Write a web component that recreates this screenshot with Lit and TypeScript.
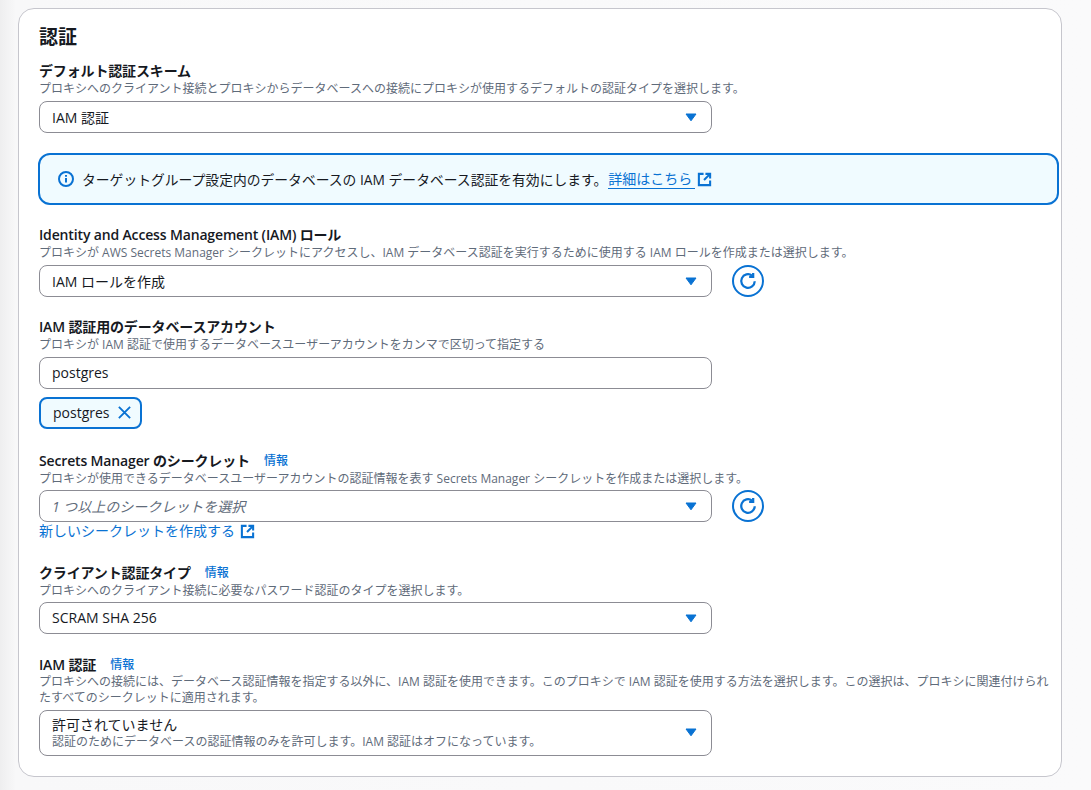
import { LitElement, html, css } from 'lit';
import { customElement } from 'lit/decorators.js';

const caret = html`<svg class="caret" viewBox="0 0 16 16"><path d="M3 5h10L8 11.8z" fill="#0972d3" stroke="#0972d3" stroke-width="1" stroke-linejoin="round"/></svg>`;
const ext = html`<svg class="ext" viewBox="0 0 16 16" fill="none" stroke="#0972d3" stroke-width="2.2"><path d="M7 2H2v12h12V9"/><path d="M9 2h5v5"/><path d="M14 2L7.5 8.5"/></svg>`;
const refresh = html`<div class="refresh"><svg viewBox="0 0 16 16" fill="none" stroke="#0972d3" stroke-width="2"><path d="M14 8.2A6 6 0 1 1 11.6 3.2"/><path d="M12.6 .8V4.4H9"/></svg></div>`;

@customElement('app-root')
export class AppRoot extends LitElement {
  static styles = css`
    :host {
      display: block;
      width: 1091px;
      height: 790px;
      overflow: hidden;
      box-sizing: border-box;
      padding: 8px 29px 0 18px;
      background: linear-gradient(90deg, #eeeeef 0, #f8f8f9 16px, #fafafb 100%);
      font-family: 'Open Sans', 'Noto Sans CJK JP', sans-serif;
      color: #16191f;
      font-size: 14px;
    }
    .card {
      box-sizing: border-box;
      height: 769px;
      background: #fff;
      border: 1px solid #c6c6cd;
      border-radius: 16px;
      padding: 16px 1px 0 20px;
    }
    h2 {
      margin: 0 0 13px;
      font-size: 19px;
      line-height: 24px;
      font-weight: 700;
    }
    .label {
      display: flex;
      gap: 14px;
      align-items: center;
      font-size: 14px;
      line-height: 18px;
      font-weight: 600;
      letter-spacing: -0.15px;
    }
    .info {
      font-size: 12px;
      font-weight: 500;
      letter-spacing: 0;
      color: #0972d3;
    }
    .desc {
      font-size: 12px;
      line-height: 16px;
      padding-top: 1px;
      color: #5f6b7a;
      white-space: nowrap;
      margin-bottom: 4px;
    }
    .has-info + .desc { margin-bottom: 3px; }
    .has-info + .wide { white-space: normal; width: 1018px; padding-top: 0; margin-bottom: 4px; }
    .row { display: flex; align-items: center; gap: 20px; }
    .select {
      box-sizing: border-box;
      width: 673px;
      height: 32px;
      flex: none;
      display: flex;
      align-items: center;
      justify-content: space-between;
      padding: 0 12px 1px 12px;
      border: 1px solid #8c8c94;
      border-radius: 8px;
      background: #fff;
      font-size: 14px;
    }
    .select.tall { height: 46px; padding-bottom: 2px; }
    .select .ph { font-style: italic; color: #5f6b7a; }
    .select .sub { font-size: 12px; line-height: 16px; color: #5f6b7a; }
    .select .main { line-height: 19px; }
    .caret { width: 16px; height: 16px; flex: none; }
    .refresh {
      box-sizing: border-box;
      width: 32px;
      height: 32px;
      border: 2px solid #0972d3;
      border-radius: 50%;
      display: flex;
      align-items: center;
      justify-content: center;
    }
    .refresh svg { width: 18px; height: 18px; }
    .alert {
      box-sizing: border-box;
      width: 1021px;
      height: 52px;
      margin: 20px 0 21px -1px;
      display: flex;
      align-items: center;
      gap: 8px;
      padding: 0 0 0 18px;
      background: #f0fbff;
      border: 2px solid #0972d3;
      border-radius: 12px;
      font-size: 14px;
    }
    .alert .i { width: 16px; height: 16px; flex: none; }
    .alert .body { display: flex; align-items: center; }
    .alert .msg { font-size: 13.8px; }
    a {
      color: #0972d3;
      text-decoration: none;
    }
    .alert a {
      border-bottom: 1px solid #0972d3;
      padding: 0 3px 0 0;
      line-height: 19px;
      margin-left: 1px;
    }
    .ext { width: 15px; height: 15px; flex: none; margin-left: 2px; }
    .link .ext { margin-left: 5px; }
    .gap { margin-top: 21px; }
    .gap-token { margin-top: 23px; }
    .gap-link { margin-top: 24px; }
    .gap-select { margin-top: 22px; }
    .token {
      box-sizing: border-box;
      display: flex;
      align-items: center;
      gap: 7px;
      width: 103px;
      height: 32px;
      margin-top: 8px;
      padding: 0 0 1px 12px;
      background: #f0fbff;
      border: 2px solid #0972d3;
      border-radius: 8px;
      font-size: 14px;
    }
    .token svg { width: 15px; height: 15px; }
    .link {
      display: flex;
      align-items: center;
      font-size: 14px;
      line-height: 18px;
    }
  `;

  render() {
    return html`
      <div class="card">
        <h2>認証</h2>

        <div class="label">デフォルト認証スキーム</div>
        <div class="desc">プロキシへのクライアント接続とプロキシからデータベースへの接続にプロキシが使用するデフォルトの認証タイプを選択します。</div>
        <div class="select"><span>IAM 認証</span>${caret}</div>

        <div class="alert">
          <svg class="i" viewBox="0 0 16 16" fill="none" stroke="#0972d3" stroke-width="2"><circle cx="8" cy="8" r="7"/><path d="M8 7v4.5M8 4v1.8"/></svg>
          <div class="body">
            <span class="msg">ターゲットグループ設定内のデータベースの IAM データベース認証を有効にします。</span>
            <a href="#">詳細はこちら</a>${ext}
          </div>
        </div>

        <div class="label">Identity and Access Management (IAM) ロール</div>
        <div class="desc">プロキシが AWS Secrets Manager シークレットにアクセスし、IAM データベース認証を実行するために使用する IAM ロールを作成または選択します。</div>
        <div class="row"><div class="select"><span>IAM ロールを作成</span>${caret}</div>${refresh}</div>

        <div class="label gap">IAM 認証用のデータベースアカウント</div>
        <div class="desc">プロキシが IAM 認証で使用するデータベースユーザーアカウントをカンマで区切って指定する</div>
        <div class="select"><span>postgres</span></div>
        <div class="token">
          <span>postgres</span>
          <svg viewBox="0 0 16 16" fill="none" stroke="#0972d3" stroke-width="2"><path d="M2 2l12 12M14 2L2 14"/></svg>
        </div>

        <div class="label has-info gap-token">Secrets Manager のシークレット<span class="info">情報</span></div>
        <div class="desc">プロキシが使用できるデータベースユーザーアカウントの認証情報を表す Secrets Manager シークレットを作成または選択します。</div>
        <div class="row"><div class="select"><span class="ph">1 つ以上のシークレットを選択</span>${caret}</div>${refresh}</div>
        <div class="link"><a href="#">新しいシークレットを作成する</a>${ext}</div>

        <div class="label has-info gap-link">クライアント認証タイプ<span class="info">情報</span></div>
        <div class="desc">プロキシへのクライアント接続に必要なパスワード認証のタイプを選択します。</div>
        <div class="select"><span>SCRAM SHA 256</span>${caret}</div>

        <div class="label has-info gap-select">IAM 認証<span class="info">情報</span></div>
        <div class="desc wide">プロキシへの接続には、データベース認証情報を指定する以外に、IAM 認証を使用できます。このプロキシで IAM 認証を使用する方法を選択します。この選択は、プロキシに関連付けられたすべてのシークレットに適用されます。</div>
        <div class="select tall">
          <div>
            <div class="main">許可されていません</div>
            <div class="sub">認証のためにデータベースの認証情報のみを許可します。IAM 認証はオフになっています。</div>
          </div>
          ${caret}
        </div>
      </div>
    `;
  }
}
